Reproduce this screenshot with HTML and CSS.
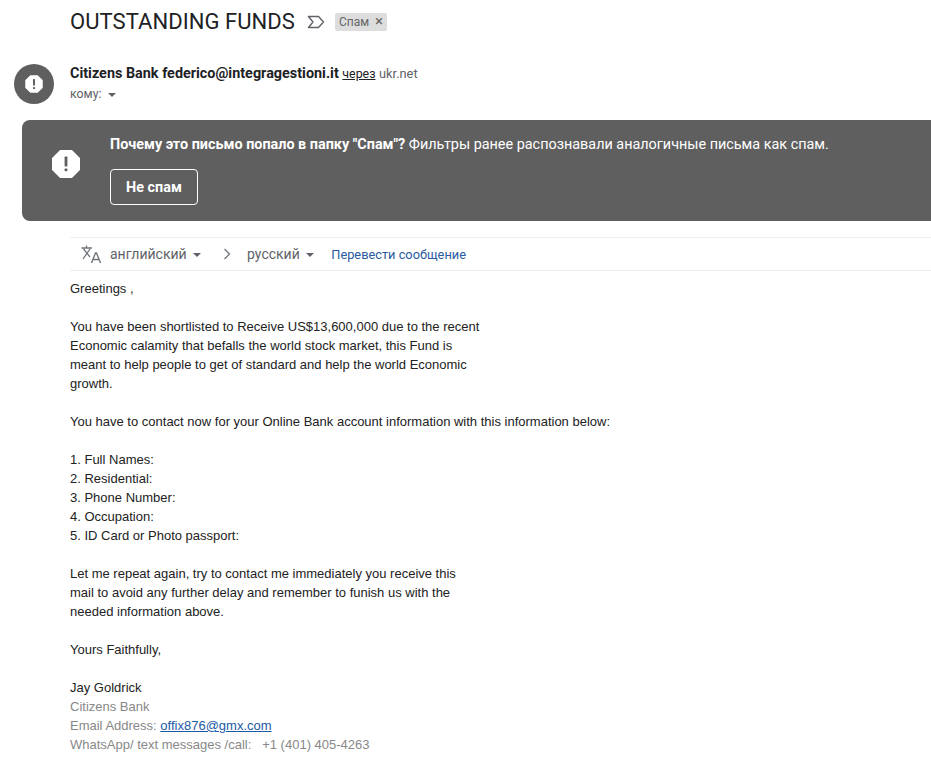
FILE: index.html
```html
<!DOCTYPE html>
<html lang="ru">
<head>
  <meta charset="UTF-8">
  <title>OUTSTANDING FUNDS</title>
  <link rel="stylesheet" href="styles.css">
</head>
<body>

<div class="subject">
  <h1>OUTSTANDING FUNDS</h1>
  <svg class="important" width="18" height="14" viewBox="0 0 18 14"><path d="M1.5 1.5H11.5L16.5 7L11.5 12.5H1.5L6 7Z" fill="none" stroke="#5f6368" stroke-width="1.4" stroke-linejoin="round"/></svg>
  <span class="label">Спам <span class="label-x">×</span></span>
</div>

<div class="sender">
  <div class="avatar">
    <svg width="18" height="18" viewBox="0 0 18 18"><path d="M5.6 1H12.4L17 5.6V12.4L12.4 17H5.6L1 12.4V5.6Z" fill="#fff" stroke="#fff" stroke-width="1.5" stroke-linejoin="round"/><rect x="8" y="4" width="2" height="6.5" rx="0.6" fill="#5f5f5f"/><rect x="8" y="12" width="2" height="2" rx="0.6" fill="#5f5f5f"/></svg>
  </div>
  <div class="sender-info">
    <div class="sender-line"><b>Citizens Bank federico@integragestioni.it</b> <u class="via">через</u> <span class="via-domain">ukr.net</span></div>
    <div class="to-line">кому: <span class="caret caret-to"></span></div>
  </div>
</div>

<div class="spam-banner">
  <svg class="spam-icon" width="30" height="30" viewBox="0 0 30 30"><path d="M9.5 2H20.5L28 9.5V20.5L20.5 28H9.5L2 20.5V9.5Z" fill="#fff" stroke="#fff" stroke-width="2" stroke-linejoin="round"/><rect x="13.6" y="7.5" width="2.8" height="10" rx="0.8" fill="#5f5f5f"/><rect x="13.6" y="19.5" width="2.8" height="2.8" rx="0.8" fill="#5f5f5f"/></svg>
  <div class="spam-text">
    <p><b>Почему это письмо попало в папку "Спам"?</b> Фильтры ранее распознавали аналогичные письма как спам.</p>
    <button class="not-spam">Не спам</button>
  </div>
</div>

<div class="translate-bar">
  <svg class="translate-icon" width="22" height="20" viewBox="0 0 22 20"><path d="M1.5 4H12M6.5 1.5V4M3 15L10 5M3.5 5L10 13" fill="none" stroke="#70757a" stroke-width="1.3"/><path d="M11.5 19L15.5 9H16.5L20.5 19M13 15.5H19" fill="none" stroke="#70757a" stroke-width="1.4"/></svg>
  <span class="lang lang-from">английский <span class="caret"></span></span>
  <svg class="lang-arrow" width="8" height="12" viewBox="0 0 8 12"><path d="M1.5 1L6.5 6L1.5 11" fill="none" stroke="#70757a" stroke-width="1.3"/></svg>
  <span class="lang lang-to">русский <span class="caret"></span></span>
  <a class="translate-link">Перевести сообщение</a>
</div>

<div class="message">
  <p>Greetings ,</p>
  <p>You have been shortlisted to Receive US$13,600,000 due to the recent<br>
  Economic calamity that befalls the world stock market, this Fund is<br>
  meant to help people to get of standard and help the world Economic<br>
  growth.</p>
  <p>You have to contact now for your Online Bank account information with this information below:</p>
  <p>1. Full Names:<br>
  2. Residential:<br>
  3. Phone Number:<br>
  4. Occupation:<br>
  5. ID Card or Photo passport:</p>
  <p>Let me repeat again, try to contact me immediately you receive this<br>
  mail to avoid any further delay and remember to funish us with the<br>
  needed information above.</p>
  <p>Yours Faithfully,</p>
  <p>Jay Goldrick<br>
  <span class="muted">Citizens Bank<br>
  Email Address: <a class="mail-link">offix876@gmx.com</a><br>
  WhatsApp/ text messages /call: &nbsp; +1 (401) 405-4263</span></p>
</div>

</body>
</html>
```

FILE: styles.css
```css
html, body {
  overflow: hidden;
}
body {
  margin: 0;
  height: 781px;
  background: #fff;
  font-family: "Liberation Sans", Arial, sans-serif;
  color: #222;
}
.subject {
  display: flex;
  align-items: center;
  padding: 7px 0 1px 70px;
  height: 28px;
}
.subject h1 {
  margin: 0;
  font-family: Roboto, sans-serif;
  font-weight: 400;
  font-size: 22px;
  letter-spacing: 0.06px;
  color: #202124;
}
.important {
  margin-left: 12px;
  margin-top: 1px;
}
.label {
  margin-left: 10px;
  margin-top: 1px;
  background: #ddd;
  color: #666;
  font-family: Roboto, sans-serif;
  font-size: 12px;
  line-height: 18px;
  padding: 0 4px;
  border-radius: 2px;
}
.label-x {
  margin-left: 3px;
  font-size: 15px;
  line-height: 12px;
}
.sender {
  display: flex;
  margin-top: 28px;
  padding-left: 14px;
}
.avatar {
  width: 40px;
  height: 40px;
  border-radius: 50%;
  background: #5f5f5f;
  display: flex;
  align-items: center;
  justify-content: center;
}
.sender-info {
  margin-left: 16px;
  padding-top: 1px;
}
.sender-line {
  font-family: Roboto, sans-serif;
  font-size: 14.4px;
  line-height: 18px;
  color: #5f6368;
}
.sender-line b {
  color: #202124;
  font-weight: 700;
}
.via {
  font-size: 12.4px;
  color: #202124;
}
.via-domain {
  font-size: 12.8px;
}
.to-line {
  font-family: Roboto, sans-serif;
  font-size: 12.3px;
  line-height: 18px;
  margin-top: 2px;
  color: #5f6368;
}
.caret {
  display: inline-block;
  width: 0;
  height: 0;
  border: 4px solid transparent;
  border-top-color: #5f6368;
  border-bottom-width: 0;
  vertical-align: middle;
  margin-left: 3px;
}
.spam-banner {
  display: flex;
  align-items: flex-start;
  margin: 16px 0 0 22px;
  height: 101px;
  background: #5f5f5f;
  border-radius: 8px 0 0 8px;
  color: #fff;
}
.spam-icon {
  margin: 29px 0 0 29px;
}
.spam-text {
  margin-left: 29px;
}
.spam-text p {
  margin: 16px 0 0;
  font-family: Roboto, sans-serif;
  font-size: 14.4px;
  line-height: 18px;
}
.not-spam {
  display: block;
  margin-top: 15px;
  width: 88px;
  height: 36px;
  padding: 0;
  background: transparent;
  border: 1px solid #fff;
  border-radius: 4px;
  color: #fff;
  font-family: Roboto, sans-serif;
  font-weight: 700;
  font-size: 14.4px;
}
.translate-bar {
  display: flex;
  align-items: center;
  margin: 16px 0 0 70px;
  height: 32px;
  border-top: 1px solid #eee;
  border-bottom: 1px solid #eee;
  font-family: Roboto, sans-serif;
  color: #5f6368;
}
.translate-icon {
  margin-left: 10px;
}
.lang {
  font-size: 14px;
}
.lang-from {
  margin-left: 8px;
}
.lang-arrow {
  margin-left: 22px;
}
.lang-to {
  margin-left: 16px;
}
.translate-link {
  margin-left: 17px;
  font-size: 12.8px;
  color: #2a5a9f;
}
.message {
  margin: 8px 0 0 70px;
  font-size: 13px;
  line-height: 19px;
  color: #222;
}
.message p {
  margin: 0 0 19px;
}
.muted {
  color: #888;
}
.mail-link {
  color: #1c5aa5;
  text-decoration: underline;
}
```
